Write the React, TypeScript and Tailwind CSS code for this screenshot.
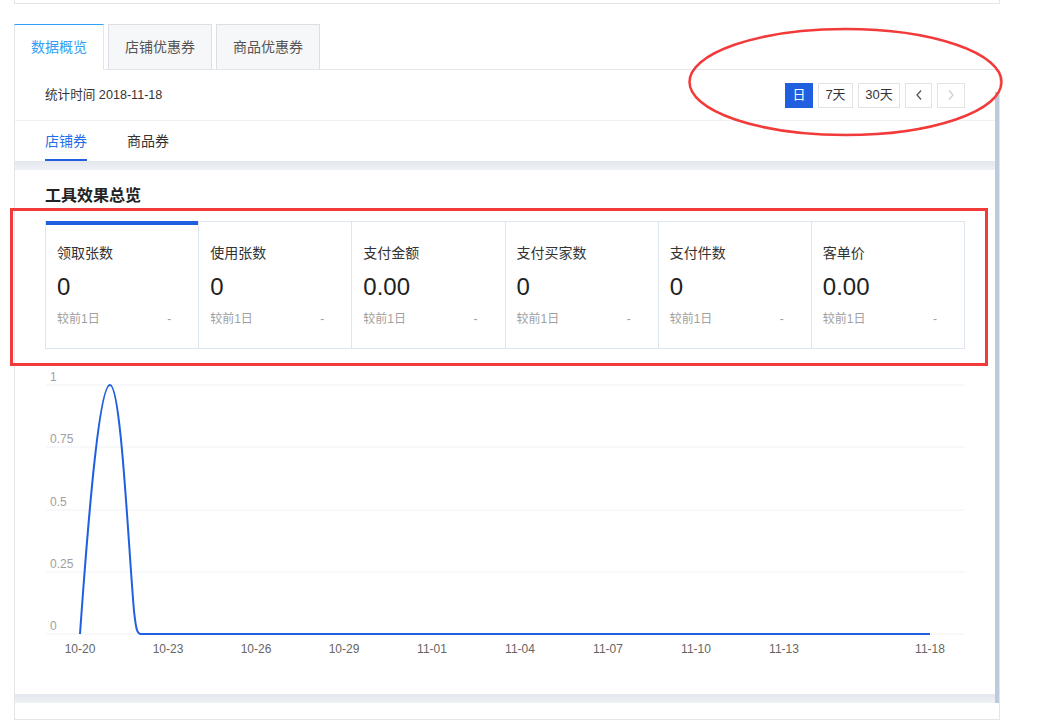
import React from "react";

const font = { fontFamily: '"Liberation Sans", "Noto Sans CJK SC", sans-serif' };

const metrics = [
  { label: "领取张数", value: "0" },
  { label: "使用张数", value: "0" },
  { label: "支付金额", value: "0.00" },
  { label: "支付买家数", value: "0" },
  { label: "支付件数", value: "0" },
  { label: "客单价", value: "0.00" },
];

const yTicks = [
  { label: "1", y: 384 },
  { label: "0.75", y: 446 },
  { label: "0.5", y: 509 },
  { label: "0.25", y: 571 },
  { label: "0", y: 633 },
];

const xTicks = [
  { label: "10-20", x: 80 },
  { label: "10-23", x: 168 },
  { label: "10-26", x: 256 },
  { label: "10-29", x: 344 },
  { label: "11-01", x: 432 },
  { label: "11-04", x: 520 },
  { label: "11-07", x: 608 },
  { label: "11-10", x: 696 },
  { label: "11-13", x: 784 },
  { label: "11-18", x: 930 },
];

function TrendChart() {
  return (
    <svg width="940" height="300" viewBox="30 366 940 300" className="block ml-[15px]" style={font}>
      {yTicks.map((t) => (
        <g key={t.label}>
          <line x1="46" x2="965" y1={t.y} y2={t.y} stroke="#eef2f7" strokeWidth="1" />
          <text x="50" y={t.y - 4} fontSize="12" fill="#a0a0a0">
            {t.label}
          </text>
        </g>
      ))}
      {xTicks.map((t) => (
        <text key={t.label} x={t.x} y="652" fontSize="12" fill="#666" textAnchor="middle">
          {t.label}
        </text>
      ))}
      <path
        d="M80,633 C88,520 99,384 110,384 C121,384 128,540 134,610 C136,628 137,633 141,633 L930,633"
        fill="none"
        stroke="#1f5fe0"
        strokeWidth="2"
      />
    </svg>
  );
}

export default function App() {
  return (
    <div className="relative w-[1042px] h-[728px] bg-white overflow-hidden text-[#333]" style={font}>
      {/* previous card edge */}
      <div className="ml-[14px] w-[986px] h-[4px] border-x border-b border-[#e3e5e8]" />

      {/* top tabs */}
      <div className="ml-[14px] mt-[20px] flex items-end h-[45px] gap-[4px]">
        <div className="relative z-10 -mb-px h-[46px] w-[90px] flex items-center justify-center bg-white border-t border-t-[#2fa0f5] border-x border-x-[#e3e5e8] text-[14px] text-[#2fa0f5]">
          数据概览
        </div>
        <div className="h-[45px] w-[104px] flex items-center justify-center bg-[#f6f7f9] border border-b-0 border-[#dcdfe6] text-[14px] text-[#555]">
          店铺优惠券
        </div>
        <div className="h-[45px] w-[104px] flex items-center justify-center bg-[#f6f7f9] border border-b-0 border-[#dcdfe6] text-[14px] text-[#555]">
          商品优惠券
        </div>
      </div>

      {/* main panel */}
      <div className="ml-[14px] w-[986px] border border-[#e3e5e8]">
        <div className="h-[51px] border-b border-[#eef0f3] flex items-center justify-between pl-[30px] pr-[34px]">
          <span className="text-[12.6px] text-[#333]">统计时间 2018-11-18</span>
          <div className="flex items-center gap-[5px] text-[13px]">
            <button className="h-[25px] w-[28px] bg-[#1f5fe0] text-white">日</button>
            <button className="h-[25px] w-[35px] border border-[#e3e3e3] text-[#333]">7天</button>
            <button className="h-[25px] w-[42px] border border-[#e3e3e3] text-[#333]">30天</button>
            <button className="h-[25px] w-[27px] border border-[#e3e3e3] flex items-center justify-center">
              <svg width="8" height="12" viewBox="0 0 8 12">
                <path d="M6 1.5 L2 6 L6 10.5" fill="none" stroke="#555" strokeWidth="1.3" />
              </svg>
            </button>
            <button className="h-[25px] w-[28px] border border-[#e3e3e3] flex items-center justify-center">
              <svg width="8" height="12" viewBox="0 0 8 12">
                <path d="M2 1.5 L6 6 L2 10.5" fill="none" stroke="#cfcfcf" strokeWidth="1.3" />
              </svg>
            </button>
          </div>
        </div>

        <div className="h-[40px] flex items-stretch gap-[40px] px-[30px] text-[14px]">
          <div className="flex items-center pt-[2px] border-b-2 border-[#1f5fe0] text-[#1f6fe8]">店铺券</div>
          <div className="flex items-center pt-[2px] border-b-2 border-transparent text-[#333]">商品券</div>
        </div>

        <div className="h-[9px] mr-[4px] bg-gradient-to-b from-[#e4e8ee] to-[#eef1f5]" />

        <div className="pt-[17px]">
          <h2 className="ml-[30px] h-[18px] leading-[18px] text-[16px] font-bold text-[#222]">工具效果总览</h2>
          <div className="ml-[30px] mt-[16px] w-[920px] grid grid-cols-6 border-t border-l border-[#dde6ef]">
            {metrics.map((m, i) => (
              <div key={m.label} className="relative h-[127px] border-r border-b border-[#dde6ef] pl-[11px] pr-[27px]">
                {i === 0 && <div className="absolute -top-px left-0 right-0 h-[4px] bg-[#1f5fe0]" />}
                <div className="mt-[22px] text-[14px] leading-[18px] text-[#333]">{m.label}</div>
                <div className="mt-[13px] text-[24px] leading-[24px] text-[#222]">{m.value}</div>
                <div className="mt-[12px] flex justify-between text-[12px] leading-[16px] text-[#a0a0a0]">
                  <span>较前1日</span>
                  <span>-</span>
                </div>
              </div>
            ))}
          </div>
          <div className="h-[345px] pt-[18px]">
            <TrendChart />
          </div>
        </div>

        <div className="h-[9px] mr-[4px] bg-gradient-to-b from-[#e4e8ee] to-[#eef1f5]" />
        <div className="h-[16px]" />
      </div>

      {/* scrollbar thumb */}
      <div className="absolute left-[995px] top-[92px] w-[4px] h-[611px] bg-[#bccbdb]" />

      {/* red annotations */}
      <svg className="absolute left-[686px] top-[26px]" width="320" height="112" viewBox="0 0 320 112">
        <ellipse cx="159.5" cy="56" rx="156" ry="53" fill="none" stroke="#f33a3a" strokeWidth="2.5" />
      </svg>
      <div className="absolute left-[10px] top-[208px] w-[978px] h-[158px] border-[3px] border-[#f33a3a]" />
    </div>
  );
}
